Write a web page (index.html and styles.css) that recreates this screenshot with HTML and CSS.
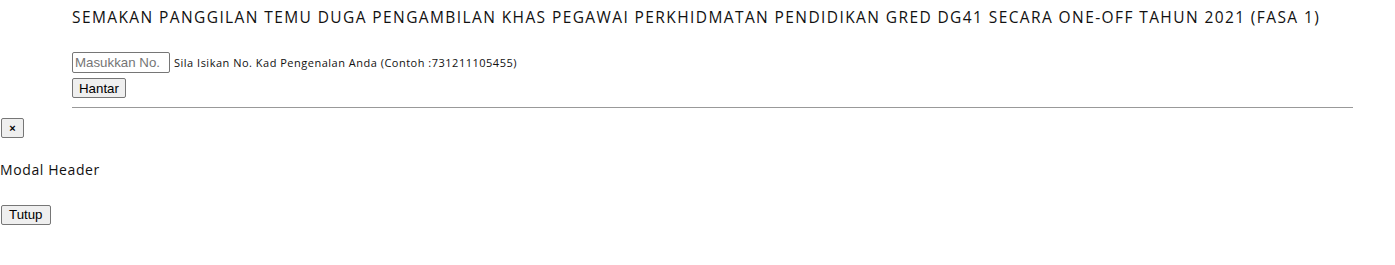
FILE: index.html
```html
<!DOCTYPE html>
<html lang="ms">
  <head>
    <meta charset="utf-8" />
    <title>Semakan Panggilan Temu Duga</title>
    <link rel="stylesheet" href="styles.css">
  </head>
  <body>
    <div class="container">
      <h4 class="page-title">SEMAKAN PANGGILAN TEMU DUGA PENGAMBILAN KHAS PEGAWAI PERKHIDMATAN PENDIDIKAN GRED DG41 SECARA ONE-OFF TAHUN 2021 (FASA 1)</h4>

      <form class="semak-form" action="#">
        <div class="row-input">
          <input type="text" name="nokp" class="nokp" placeholder="Masukkan No." />
          <span class="hint">Sila Isikan No. Kad Pengenalan Anda (Contoh :731211105455)</span>
        </div>
        <button type="submit" class="btn">Hantar</button>
      </form>
      <hr class="line" />
    </div>

    <!-- modal -->
    <div class="modal">
      <div class="modal-header">
        <button type="button" class="btn close">&times;</button>
        <h4 class="modal-title">Modal Header</h4>
      </div>
      <div class="modal-footer">
        <button type="button" class="btn">Tutup</button>
      </div>
    </div>
  </body>
</html>
```

FILE: styles.css
```css
* {
  box-sizing: border-box;
}
body {
  margin: 0;
  font-family: 'Open Sans', 'Liberation Sans', sans-serif;
  color: #111;
  background: #fff;
}
.container {
  padding: 0 42px 0 72px;
}
.page-title {
  margin: 0;
  padding-top: 7px;
  font-size: 15.5px;
  line-height: 20px;
  font-weight: 400;
  letter-spacing: 1.4px;
}
.semak-form {
  margin-top: 25px;
}
.row-input {
  display: flex;
  align-items: center;
  gap: 4px;
}
.nokp {
  width: 98px;
  height: 21px;
  padding: 1px 2px;
  font-family: 'Liberation Sans', Arial, sans-serif;
  font-size: 13.3px;
  border: 1px solid #767676;
  border-radius: 2px;
}
.nokp::placeholder {
  color: #757575;
}
.hint {
  font-size: 11px;
  letter-spacing: 0.5px;
}
.btn {
  margin-top: 5px;
  padding: 1px 6px;
  height: 20px;
  font-family: 'Liberation Sans', Arial, sans-serif;
  font-size: 13.3px;
  color: #000;
  background: #efefef;
  border: 1px solid #767676;
  border-radius: 2px;
}
.line {
  margin: 9px 0 0;
  border: 0;
  border-top: 1px solid #999;
}
.modal-header {
  padding-top: 10px;
}
.close {
  display: block;
  margin: 0 0 0 1px;
  width: 23px;
  font-size: 11px;
  font-weight: 700;
}
.modal-title {
  margin: 23px 0 0;
  font-size: 14px;
  line-height: 18px;
  font-weight: 400;
  letter-spacing: 0.6px;
}
.modal-footer {
  padding-top: 23px;
}
.modal-footer .btn {
  margin: 0 0 0 1px;
  padding: 1px 7px;
}
```
